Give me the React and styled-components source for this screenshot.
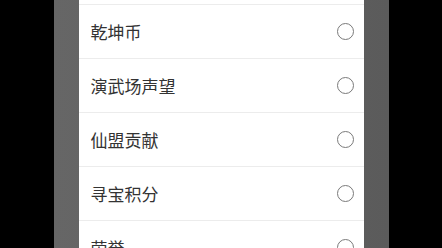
import styled, { createGlobalStyle } from 'styled-components';

const items = ['', '乾坤币', '演武场声望', '仙盟贡献', '寻宝积分', '荣誉'];

const GlobalStyle = createGlobalStyle`
  html, body {
    margin: 0;
    height: 100%;
    background: #000;
    overflow: hidden;
  }
`;

const App = () => (
  <>
    <GlobalStyle />
    <Screen>
      <Overlay>
        <Sheet>
          <List>
            {items.map((name, i) => (
              <Row key={i}>
                <Label>{name}</Label>
                {name && <Radio />}
              </Row>
            ))}
          </List>
        </Sheet>
      </Overlay>
    </Screen>
  </>
);

export default App;

const Screen = styled.div`
  width: 442px;
  height: 248px;
  display: flex;
  justify-content: center;
  background: #000;
`;

const Overlay = styled.div`
  width: 335px;
  height: 100%;
  padding: 0 25px;
  box-sizing: border-box;
  background: linear-gradient(90deg, #666 0%, #5b5b5b 100%);
  display: flex;
`;

const Sheet = styled.div`
  flex: 1;
  background: #fff;
  overflow: hidden;
`;

const List = styled.div`
  margin-top: -49px;
  display: flex;
  flex-direction: column;
`;

const Row = styled.div`
  height: 54px;
  box-sizing: border-box;
  display: flex;
  align-items: center;
  justify-content: space-between;
  padding: 0 10px 0 12px;
  border-bottom: 1px solid #ececec;
`;

const Label = styled.span`
  font-family: 'Noto Sans CJK SC', sans-serif;
  font-size: 17px;
  color: #333;
`;

const Radio = styled.span`
  width: 17px;
  height: 17px;
  box-sizing: border-box;
  border: 1.5px solid #7a7a7a;
  border-radius: 50%;
`;
